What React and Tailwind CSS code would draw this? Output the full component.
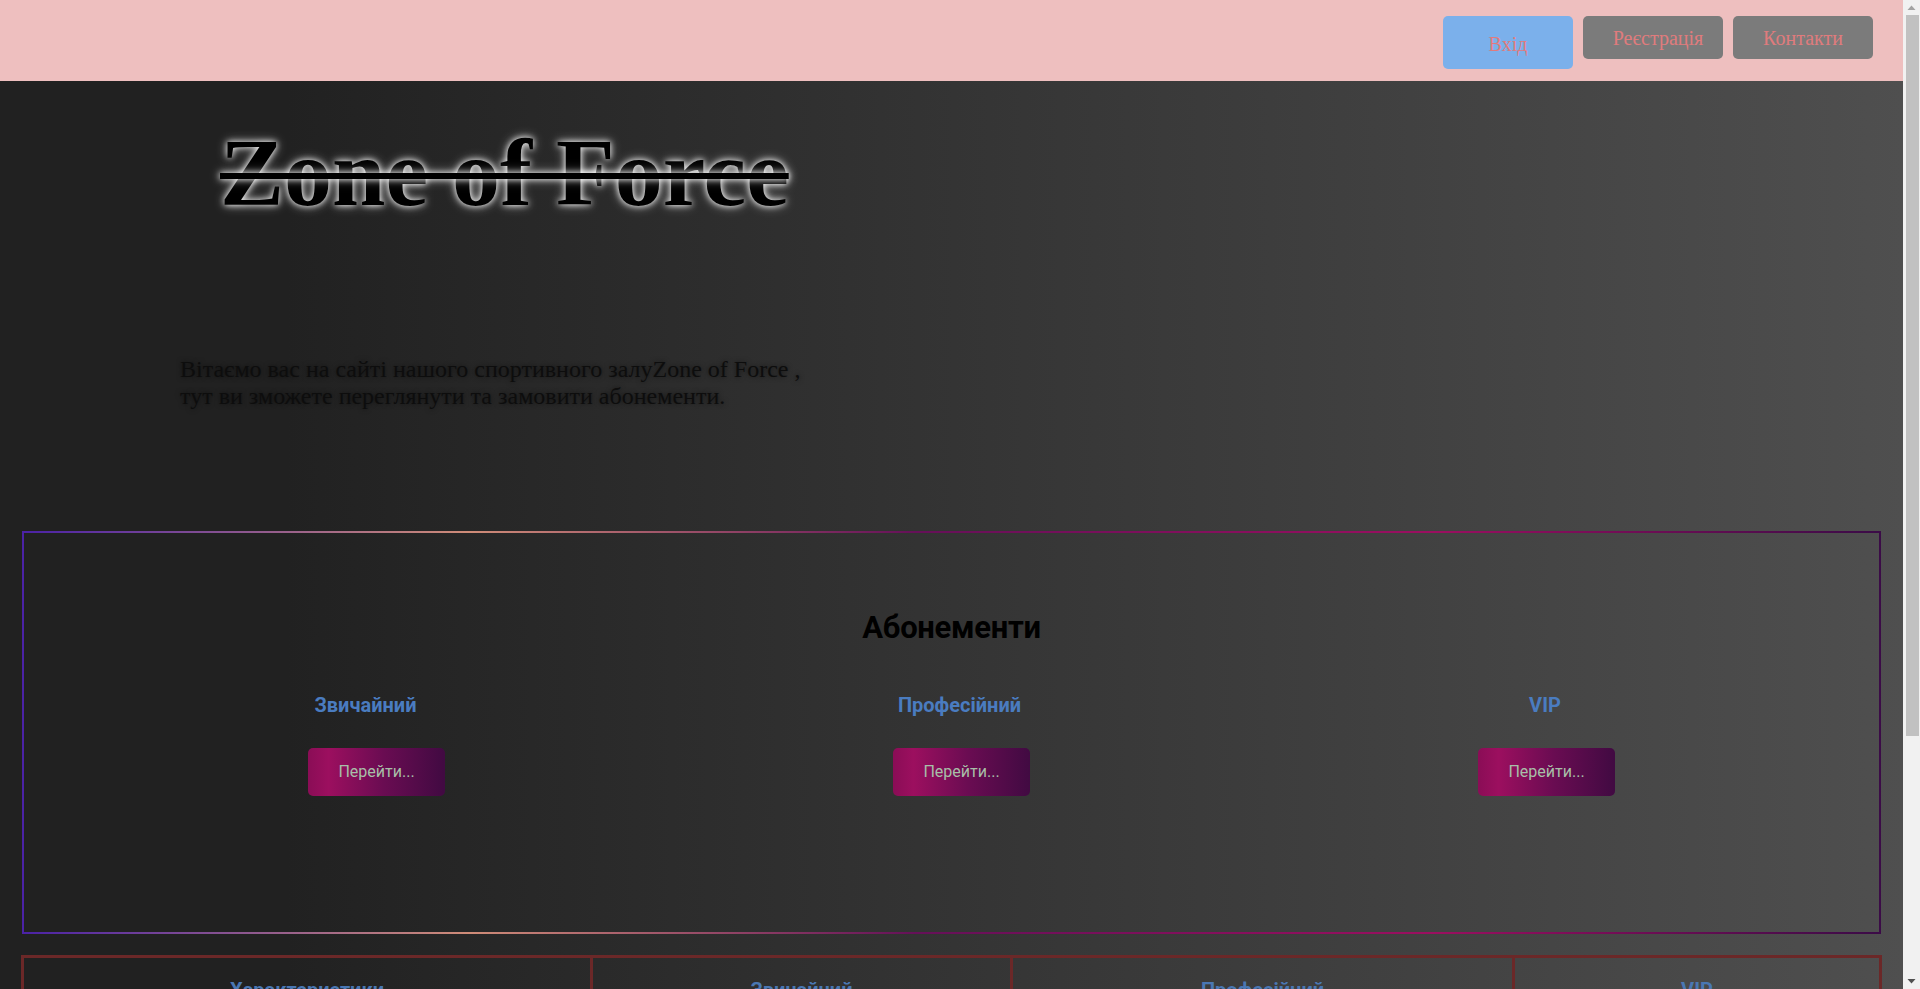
import React from "react";

const plans = [
  { name: "Звичайний", shift: "pr-[22px]" },
  { name: "Професійний", shift: "pr-[4px]" },
  { name: "VIP", shift: "pr-[3px]" },
];

const rows = [
  ["Тренажерний зал", "+", "+", "+"],
  ["Групові заняття", "-", "+", "+"],
  ["Персональний тренер", "-", "-", "+"],
  ["Сауна", "-", "+", "+"],
  ["Ціна за місяць", "600 грн", "900 грн", "1500 грн"],
];

// смуга прокрутки вікна, як на скріншоті
function Scrollbar() {
  return (
    <aside className="w-[17px] h-full bg-[#f1f1f1] flex flex-col items-center">
      <svg width="17" height="15" viewBox="0 0 17 15" className="shrink-0">
        <polygon points="4.5,10 12.5,10 8.5,5.5" fill="#a3a3a3" />
      </svg>
      <div className="w-[13px] ml-[1px] h-[721px] bg-[#c1c1c1]" />
      <div className="flex-1" />
      <svg width="17" height="15" viewBox="0 0 17 15" className="shrink-0">
        <polygon points="4.5,5 12.5,5 8.5,9.5" fill="#505050" />
      </svg>
    </aside>
  );
}

export default function App() {
  return (
    <div className="flex h-screen overflow-hidden font-['Liberation_Serif','Times_New_Roman',serif]">
      <div className="w-[1903px] h-full overflow-hidden">
        {/* шапка */}
        <header className="h-[81px] bg-[#eebfbf] flex justify-end items-start gap-[10px] pt-4 pr-[30px]">
          <button className="w-[130px] h-[53px] rounded-[5px] bg-[#7bb0eb] text-[#e07b7d] text-[20px] pt-[2px]">
            Вхід
          </button>
          <button className="w-[140px] h-[43px] rounded-[5px] bg-[#7b7b7b] text-[#e07b7d] text-[20px] pl-[10px]">
            Реєстрація
          </button>
          <button className="w-[140px] h-[43px] rounded-[5px] bg-[#7b7b7b] text-[#e07b7d] text-[20px]">
            Контакти
          </button>
        </header>

        <main className="bg-[linear-gradient(to_right,#212121_15%,#4f4f4f)] pt-[44px] pb-[120px]">
          <h1 className="inline-block ml-[220px] text-[96px] leading-none font-bold text-black line-through decoration-black decoration-[6px] [text-shadow:0_0_6px_#fff,0_0_12px_rgba(255,255,255,0.55)]">
            Zone of Force
          </h1>

          <p className="ml-[180px] mt-[135px] w-[640px] text-[24px] leading-[27px] font-normal text-[#0d0d0d] [text-shadow:0_0_5px_rgba(0,0,0,0.6)]">
            Вітаємо вас на сайті нашого спортивного залуZone of Force , тут ви зможете переглянути та замовити абонементи.
          </p>

          {/* абонементи */}
          <section className="mx-[22px] mt-[121px] h-[403px] border-2 [border-image:linear-gradient(to_right,#4b22a6,#cf8c78_24%,#651058_48%,#9b0f60_76%,#3b0b47)_1] pt-[76px] font-['Roboto',sans-serif]">
            <h2 className="text-center text-[31px] leading-[38px] tracking-[-0.3px] font-bold text-black">Абонементи</h2>
            <div className="grid grid-cols-[585px_585px_585px] pl-[60px] mt-[46px]">
              {plans.map((p) => (
                <div key={p.name} className="flex flex-col items-center">
                  <h3 className={`text-[20px] leading-[24px] font-bold text-[#4a7cc0] ${p.shift}`}>{p.name}</h3>
                  <button className="mt-[31px] w-[137px] h-[48px] rounded-[5px] bg-[linear-gradient(to_right,#8a0d56,#9c0f5f_15%,#6a0c52_55%,#410a42)] text-[16px] text-[#a8bfa8]">
                    Перейти...
                  </button>
                </div>
              ))}
            </div>
          </section>

          {/* таблиця порівняння */}
          <table className="mx-[21px] mt-[21px] w-[1861px] border-collapse border-[3px] border-[#6b2828] font-['Roboto',sans-serif]">
            <thead>
              <tr>
                {["Характеристики", "Звичайний", "Професійний", "VIP"].map((h, i) => (
                  <th
                    key={h}
                    className={`border-[3px] border-[#6b2828] pt-[20px] pb-4 text-[20px] leading-[24px] font-bold text-[#4a77b3] ${
                      i === 0 ? "w-[569px]" : i === 1 ? "w-[420px]" : i === 2 ? "w-[502px]" : ""
                    }`}
                  >
                    {h}
                  </th>
                ))}
              </tr>
            </thead>
            <tbody>
              {rows.map((r) => (
                <tr key={r[0]}>
                  {r.map((c, i) => (
                    <td key={i} className="border-[3px] border-[#6b2828] py-4 text-center text-[18px] text-[#a8bfa8]">
                      {c}
                    </td>
                  ))}
                </tr>
              ))}
            </tbody>
          </table>
        </main>
      </div>
      <Scrollbar />
    </div>
  );
}
